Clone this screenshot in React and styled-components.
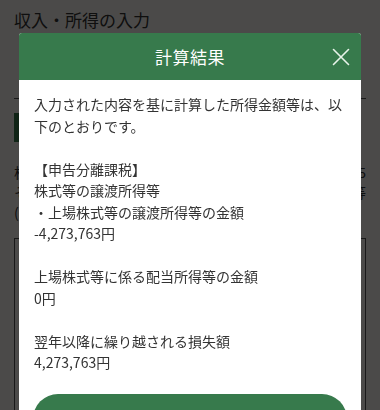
import React from "react"
import styled, { createGlobalStyle } from "styled-components"

const GlobalStyle = createGlobalStyle`
  html, body {
    margin: 0;
    padding: 0;
    background: #fcf8f4;
    font-family: "Noto Sans CJK JP", "Noto Sans", sans-serif;
    overflow: hidden;
  }
`

const results = [
  {
    lines: [
      "【申告分離課税】",
      "株式等の譲渡所得等",
      "・上場株式等の譲渡所得等の金額",
      "-4,273,763円",
    ],
  },
  { lines: ["上場株式等に係る配当所得等の金額", "0円"] },
  { lines: ["翌年以降に繰り越される損失額", "4,273,763円"] },
]

const backRows = [
  ["株", "5"],
  ["そ", "等"],
  ["(", ""],
]

const CloseIcon = () => (
  <svg width="18" height="18" viewBox="0 0 18 18" fill="none">
    <path
      d="M1.5 1.5 L16.5 16.5 M16.5 1.5 L1.5 16.5"
      stroke="#e8f3ea"
      strokeWidth="1.6"
      strokeLinecap="round"
    />
  </svg>
)

export default function App() {
  return (
    <>
      <GlobalStyle />
      <Page>
        <PageTitle>収入・所得の入力</PageTitle>
        <Divider />
        <GreenTab />
        <BackRows>
          {backRows.map(([l, r], i) => (
            <BackText key={i}>
              <span>{l}</span>
              <span>{r}</span>
            </BackText>
          ))}
        </BackRows>
        <BackBox />
      </Page>
      <Overlay>
        <Modal>
          <ModalHeader>
            <ModalTitle>計算結果</ModalTitle>
            <CloseButton aria-label="閉じる">
              <CloseIcon />
            </CloseButton>
          </ModalHeader>
          <ModalBody>
            <Intro>入力された内容を基に計算した所得金額等は、以下のとおりです。</Intro>
            {results.map((block, i) => (
              <Block key={i}>
                {block.lines.map((line) => (
                  <Line key={line}>{line}</Line>
                ))}
              </Block>
            ))}
            <PrimaryButton>閉じる</PrimaryButton>
          </ModalBody>
        </Modal>
      </Overlay>
    </>
  )
}

const Page = styled.div`
  width: 380px;
  height: 410px;
  padding: 6px 14px 0;
  box-sizing: border-box;
  display: flex;
  flex-direction: column;
  color: #333;
`

const PageTitle = styled.h1`
  margin: 0;
  font-size: 17px;
  font-weight: 400;
  line-height: 28px;
  color: #333;
`

const Divider = styled.div`
  margin-top: 64px;
  height: 1px;
  background: #555;
`

const GreenTab = styled.div`
  margin-top: 14px;
  width: 40px;
  height: 29px;
  background: #377a4c;
`

const BackRows = styled.div`
  margin-top: 20px;
  display: flex;
  flex-direction: column;
`

const BackText = styled.div`
  display: flex;
  justify-content: space-between;
  font-size: 14px;
  line-height: 20px;
`

const BackBox = styled.div`
  margin-top: 16px;
  flex: 1;
  border: 1px solid #555;
  border-bottom: none;
`

const Overlay = styled.div`
  position: fixed;
  inset: 0;
  background: rgba(0, 0, 0, 0.7);
  display: flex;
  justify-content: center;
  padding-top: 33px;
`

const Modal = styled.div`
  width: 342px;
  align-self: flex-start;
  background: #fff;
  border-radius: 3px 3px 0 0;
  overflow: hidden;
`

const ModalHeader = styled.div`
  height: 47px;
  background: #377a4c;
  position: relative;
  display: flex;
  align-items: center;
  justify-content: center;
`

const ModalTitle = styled.h2`
  margin: 0;
  font-size: 17px;
  font-weight: 400;
  color: #fff;
  letter-spacing: 0.5px;
`

const CloseButton = styled.button`
  position: absolute;
  right: 11px;
  top: 50%;
  transform: translateY(-50%);
  background: none;
  border: none;
  padding: 0;
  width: 18px;
  height: 18px;
  display: flex;
  cursor: pointer;
`

const ModalBody = styled.div`
  padding: 14px 15px 20px;
  font-size: 14px;
  line-height: 21.5px;
  color: #333;
`

const Intro = styled.p`
  margin: 0;
`

const Block = styled.div`
  margin-top: 21.5px;
`

const Line = styled.div``

const PrimaryButton = styled.button`
  margin-top: 20px;
  width: 314px;
  margin-left: -1px;
  height: 50px;
  border: none;
  border-radius: 25px;
  background: #377a4c;
  color: #fff;
  font-family: inherit;
  font-size: 17px;
  letter-spacing: 1px;
`
